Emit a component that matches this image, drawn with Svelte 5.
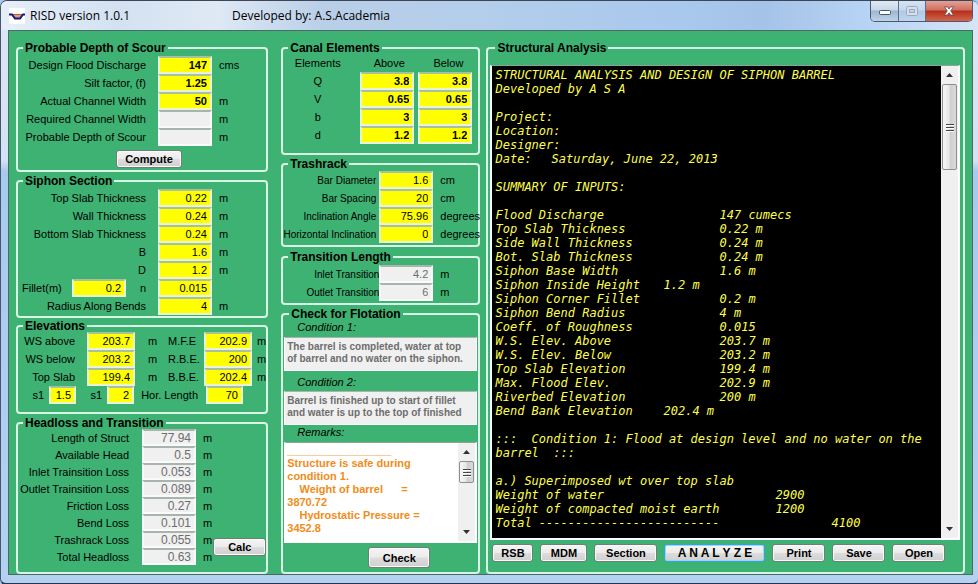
<script>
  const scour = [
    { label: 'Design Flood Discharge', value: '147', unit: 'cms' },
    { label: 'Silt factor, (f)', value: '1.25', unit: '' },
    { label: 'Actual Channel Width', value: '50', unit: 'm' },
    { label: 'Required Channel Width', value: '', unit: 'm', out: true },
    { label: 'Probable Depth of Scour', value: '', unit: 'm', out: true }
  ];
  const siphon = [
    { label: 'Top Slab Thickness', value: '0.22', unit: 'm' },
    { label: 'Wall Thickness', value: '0.24', unit: 'm' },
    { label: 'Bottom Slab Thickness', value: '0.24', unit: 'm' },
    { label: 'B', value: '1.6', unit: 'm' },
    { label: 'D', value: '1.2', unit: 'm' }
  ];
  const elevations = [
    { label: 'WS above', value: '203.7', label2: 'M.F.E', value2: '202.9' },
    { label: 'WS below', value: '203.2', label2: 'R.B.E.', value2: '200' },
    { label: 'Top Slab', value: '199.4', label2: 'B.B.E.', value2: '202.4' }
  ];
  const losses = [
    { label: 'Length of Struct', value: '77.94', unit: 'm', out: true },
    { label: 'Available Head', value: '0.5', unit: 'm', out: true },
    { label: 'Inlet Trainsition Loss', value: '0.053', unit: 'm', out: true },
    { label: 'Outlet Trainsition Loss', value: '0.089', unit: 'm', out: true },
    { label: 'Friction Loss', value: '0.27', unit: 'm', out: true },
    { label: 'Bend Loss', value: '0.101', unit: 'm', out: true },
    { label: 'Trashrack Loss', value: '0.055', unit: 'm', out: true },
    { label: 'Total Headloss', value: '0.63', unit: 'm', out: true }
  ];
  const canal = [
    ['Q', '3.8', '3.8'],
    ['V', '0.65', '0.65'],
    ['b', '3', '3'],
    ['d', '1.2', '1.2']
  ];
  const trashrack = [
    { label: 'Bar Diameter', value: '1.6', unit: 'cm' },
    { label: 'Bar Spacing', value: '20', unit: 'cm' },
    { label: 'Inclination Angle', value: '75.96', unit: 'degrees' },
    { label: 'Horizontal Inclination', value: '0', unit: 'degrees' }
  ];
  const transition = [
    { label: 'Inlet Transition', value: '4.2', unit: 'm', out: true },
    { label: 'Outlet Transition', value: '6', unit: 'm', out: true }
  ];

  const remarks = [
    '_________________',
    'Structure is safe during',
    'condition 1.',
    '    Weight of barrel      =',
    '3870.72',
    '    Hydrostatic Pressure =',
    '3452.8'
  ].join('\n');

  const report = [
    'STRUCTURAL ANALYSIS AND DESIGN OF SIPHON BARREL',
    'Developed by A S A',
    '',
    'Project:',
    'Location:',
    'Designer:',
    'Date:\tSaturday, June 22, 2013',
    '',
    'SUMMARY OF INPUTS:',
    '',
    'Flood Discharge\t\t\t147 cumecs',
    'Top Slab Thickness\t\t0.22 m',
    'Side Wall Thickness\t\t0.24 m',
    'Bot. Slab Thickness\t\t0.24 m',
    'Siphon Base Width\t\t1.6 m',
    'Siphon Inside Height\t1.2 m',
    'Siphon Corner Fillet\t\t0.2 m',
    'Siphon Bend Radius\t\t4 m',
    'Coeff. of Roughness\t\t0.015',
    'W.S. Elev. Above\t\t203.7 m',
    'W.S. Elev. Below\t\t203.2 m',
    'Top Slab Elevation\t\t199.4 m',
    'Max. Flood Elev.\t\t202.9 m',
    'Riverbed Elevation\t\t200 m',
    'Bend Bank Elevation\t202.4 m',
    '',
    ':::  Condition 1: Flood at design level and no water on the',
    'barrel  :::',
    '',
    'a.) Superimposed wt over top slab',
    'Weight of water\t\t\t\t2900',
    'Weight of compacted moist earth\t1200',
    'Total -------------------------\t\t4100'
  ].join('\n');

  const slug = (group, text) => group + '-' + text.toLowerCase().replace(/[^a-z0-9]+/g, '-');
</script>

{#snippet rows(group, items)}
  {#each items as item}
    <div class="row">
      <label for={slug(group, item.label)}>{item.label}</label>
      <input id={slug(group, item.label)} type="text" value={item.value} readonly={item.out} class:out={item.out} />
      <span class="unit">{item.unit}</span>
    </div>
  {/each}
{/snippet}

{#snippet scrollbar(kind)}
  <div class="scrollbar {kind}" aria-hidden="true">
    <svg class="arrow" viewBox="0 0 7 4"><path d="M3.5 0 7 4H0Z" fill="#333" /></svg>
    <div class="thumb">
      <svg viewBox="0 0 8 9"><path d="M0 1.500h8M0 4.500h8M0 7.500h8" stroke="#444" /><path d="M0 2.500h8M0 5.500h8M0 8.500h8" stroke="#fff" /></svg>
    </div>
    <svg class="arrow down" viewBox="0 0 7 4"><path d="M0 0H7L3.5 4Z" fill="#333" /></svg>
  </div>
{/snippet}

<div class="window">
  <header>
    <svg class="logo" viewBox="0 0 16 16">
      <rect width="16" height="16" fill="#fff" />
      <path d="M3.500 6.500h9.500l-2.500 4H6Z" fill="#e0a070" />
      <path d="M4 6.500h9" stroke="#b8602c" />
      <path d="M0 6.500h3l3 4h5l3-4h2" fill="none" stroke="#16168c" stroke-width="2" />
    </svg>
    <span class="name">RISD version 1.0.1</span>
    <span>Developed by: A.S.Academia</span>
    <div class="controls">
      <button aria-label="Minimize"><svg viewBox="0 0 12 10"><rect x=".5" y="4.500" width="11" height="4" rx="1" fill="#fff" stroke="#4a5566" /></svg></button>
      <button class="max" aria-label="Maximize" disabled><svg viewBox="0 0 12 10"><rect x=".5" y=".5" width="11" height="9" rx="1" fill="#d6e0ea" stroke="#9aabbf" /><rect x="3.500" y="3.500" width="5" height="3" fill="#c2d2e2" stroke="#9aabbf" /></svg></button>
      <button class="close" aria-label="Close"><svg viewBox="0 0 12 11"><path d="M1 1h3.200L6 3.300 7.800 1H11L7.900 5.300 11 10H7.800L6 7.400 4.200 10H1l3.100-4.700Z" fill="#fff" stroke="#5d4040" stroke-width=".8" /></svg></button>
    </div>
  </header>

  <main>
    <div class="col left">
      <fieldset class="scour">
        <legend>Probable Depth of Scour</legend>
        {@render rows('scour', scour)}
        <button class="btn">Compute</button>
      </fieldset>

      <fieldset class="siphon">
        <legend>Siphon Section</legend>
        {@render rows('siphon', siphon)}
        <div class="row fillet">
          <label for="fillet">Fillet(m)</label>
          <input id="fillet" type="text" value="0.2" />
          <label for="siphon-n">n</label>
          <input id="siphon-n" type="text" value="0.015" />
          <span class="unit"></span>
        </div>
        {@render rows('siphon', [{ label: 'Radius Along Bends', value: '4', unit: 'm' }])}
      </fieldset>

      <fieldset class="elev">
        <legend>Elevations</legend>
        {#each elevations as e}
          <div class="row">
            <label for={slug('elev', e.label)}>{e.label}</label>
            <input id={slug('elev', e.label)} type="text" value={e.value} />
            <span class="unit">m</span>
            <label class="second" for={slug('elev', e.label2)}>{e.label2}</label>
            <input id={slug('elev', e.label2)} type="text" value={e.value2} />
            <span class="unit last">m</span>
          </div>
        {/each}
        <div class="row slopes">
          <label for="slope-a">s1</label>
          <input id="slope-a" type="text" value="1.5" />
          <label for="slope-b">s1</label>
          <input id="slope-b" type="text" value="2" />
          <label for="hor-length">Hor. Length</label>
          <input id="hor-length" class="wide" type="text" value="70" />
        </div>
      </fieldset>

      <fieldset class="loss">
        <legend>Headloss and Transition</legend>
        <div class="split">
          <div>{@render rows('loss', losses)}</div>
          <button class="btn">Calc</button>
        </div>
      </fieldset>
    </div>

    <div class="col mid">
      <fieldset class="canal">
        <legend>Canal Elements</legend>
        <table>
          <thead>
            <tr><th scope="col">Elements</th><th scope="col">Above</th><th scope="col">Below</th></tr>
          </thead>
          <tbody>
            {#each canal as [name, above, below]}
              <tr>
                <th scope="row">{name}</th>
                <td><input type="text" value={above} aria-label="{name} above" /></td>
                <td><input type="text" value={below} aria-label="{name} below" /></td>
              </tr>
            {/each}
          </tbody>
        </table>
      </fieldset>

      <fieldset class="trash">
        <legend>Trashrack</legend>
        {@render rows('trash', trashrack)}
      </fieldset>

      <fieldset class="trans">
        <legend>Transition Length</legend>
        {@render rows('trans', transition)}
      </fieldset>

      <fieldset class="flotation">
        <legend>Check for Flotation</legend>
        <label for="cond1">Condition 1:</label>
        <textarea id="cond1" class="cond" readonly value={'The barrel is completed, water at top\nof barrel and no water on the siphon.'}></textarea>
        <label for="cond2" class="later">Condition 2:</label>
        <textarea id="cond2" class="cond" readonly value={'Barrel is finished up to start of fillet\nand water is up to the top of finished'}></textarea>
        <label for="remarks">Remarks:</label>
        <div class="pane remarks">
          <textarea id="remarks" readonly value={remarks}></textarea>
          {@render scrollbar('small')}
        </div>
        <button class="btn">Check</button>
      </fieldset>
    </div>

    <div class="col right">
      <fieldset class="analysis">
        <legend>Structural Analysis</legend>
        <div class="pane report">
          <textarea aria-label="Structural analysis report" readonly value={report}></textarea>
          {@render scrollbar('large')}
        </div>
        <div class="actions">
          <button class="btn s">RSB</button>
          <button class="btn m">MDM</button>
          <button class="btn l">Section</button>
          <button class="btn focus">A N A L Y Z E</button>
          <button class="btn">Print</button>
          <button class="btn">Save</button>
          <button class="btn">Open</button>
        </div>
      </fieldset>
    </div>
  </main>
</div>

<style>
  :global(body) {
    margin: 0;
    background: #a9c9ee;
  }
  .window {
    box-sizing: border-box;
    min-height: 100vh;
    display: flex;
    flex-direction: column;
    padding: 0 5px 8px 7px;
    border-top: 1px solid #3c4657;
    border-left: 1px solid #46566c;
    border-bottom: 2px solid #26354c;
    border-radius: 7px 7px 6px 6px;
    background: linear-gradient(#dbe7f5 0, #d3e2f4 160px, #a9c9ee 170px, #b4d1f2 100%);
    font-family: 'Liberation Sans', Arial, sans-serif;
    font-size: 11px;
    color: #000;
  }
  header {
    display: flex;
    align-items: center;
    height: 29px;
    margin: 0 -5px 0 -7px;
    padding: 0 5px 0 8px;
    border-radius: 6px 6px 0 0;
    box-sizing: border-box;
    background: linear-gradient(90deg, #e6eff9 0, #d3e1f1 12%, #dfe9f5 22%, #b9cfe8 33%, #b3cdeb 50%, #a9c8ee 70%, #a5c3e8 78%, #b6d2f4 88%, #d5e4f6 100%);
    font-family: 'Open Sans', 'Noto Sans', sans-serif;
    font-size: 12px;
  }
  .logo {
    width: 16px;
    height: 16px;
    flex: none;
  }
  .name {
    width: 207px;
    padding-left: 5px;
    box-sizing: border-box;
  }
  .controls {
    display: flex;
    align-self: flex-start;
    margin-left: auto;
    height: 20px;
    border: 1px solid #4b5a70;
    border-top: 0;
    border-radius: 0 0 5px 5px;
    overflow: hidden;
  }
  .controls button {
    display: flex;
    align-items: center;
    justify-content: center;
    width: 28px;
    padding: 0;
    border: 0;
    border-right: 1px solid #5d6f88;
    background: linear-gradient(#dfe9f4 0, #c8d8e9 45%, #9fb6d0 50%, #bdd3ea 100%);
  }
  .controls .max {
    width: 27px;
    background: linear-gradient(#d5e3f1 0, #c5d8ec 45%, #b1c9e3 50%, #bfd6ef 100%);
  }
  .controls .close {
    width: 46px;
    border: 0;
    background: linear-gradient(#e2a196 0, #d0705f 45%, #b52f1b 50%, #d2654c 100%);
  }
  .controls svg {
    width: 12px;
    height: 10px;
  }
  main {
    flex: 1;
    display: grid;
    grid-template-columns: 252fr 212fr 484fr;
    padding: 11px 7px 0 7px;
    border: 1px solid #4a6a68;
    background: #3eb272;
  }
  .col {
    display: flex;
    flex-direction: column;
    min-width: 0;
  }
  .mid {
    margin-left: 13px;
  }
  .right {
    margin-left: 6px;
  }
  fieldset {
    min-width: 0;
    margin: 0;
    padding: 0;
    border: 2px solid #d8f5e6;
    border-radius: 4px;
  }
  legend {
    margin-left: 5px;
    padding: 0 2px;
    font-size: 12px;
    line-height: 12px;
    font-weight: bold;
    white-space: nowrap;
  }
  .row {
    display: flex;
    align-items: center;
    height: 18px;
    white-space: nowrap;
  }
  .row label {
    width: 128px;
    text-align: right;
    flex: none;
  }
  input {
    box-sizing: border-box;
    width: 54px;
    height: 18px;
    padding: 0 3px;
    border: 2px solid #e9f3d8;
    border-top-color: #a9c0a0;
    background: #ff0;
    color: #000;
    font: 11px 'Liberation Sans', Arial, sans-serif;
    text-align: right;
    flex: none;
  }
  input.out {
    background: #f0f0f0;
    border-color: #fafafa;
    border-top-color: #a8b4ac;
    color: #6d6d6d;
  }
  .unit {
    padding-left: 7px;
  }
  .btn {
    height: 18px;
    width: 53px;
    padding: 0;
    border: 1px solid #6f7f77;
    border-radius: 3px;
    background: linear-gradient(#f4f4f4 0, #ececec 48%, #dcdcdc 52%, #d0d0d0 100%);
    box-shadow: inset 0 0 0 1px #fafafa;
    color: #000;
    font: bold 11px 'Liberation Sans', Arial, sans-serif;
    white-space: nowrap;
  }

  /* left column */
  .scour .row label,
  .siphon .row label {
    padding-right: 12px;
  }
  .scour .row input {
    font-weight: bold;
  }
  .scour {
    padding-top: 2px;
    height: 130px;
    box-sizing: border-box;
  }
  .scour .btn {
    display: block;
    width: 66px;
    margin: 4px 0 0 98px;
  }
  .siphon {
    margin-top: 3px;
    padding: 2px 0 1px;
  }
  .siphon .fillet label:first-child {
    width: 54px;
    padding-right: 0;
    text-align: left;
    padding-left: 4px;
    box-sizing: border-box;
  }
  .siphon .fillet input + label {
    width: 20px;
  }
  .elev {
    margin-top: 2px;
    padding-bottom: 8px;
  }
  .elev .row label {
    width: 57px;
    padding-right: 12px;
  }
  .elev .row input {
    width: 48px;
  }
  .elev .row .unit {
    width: 20px;
    padding-left: 13px;
  }
  .elev .row .second {
    width: 36px;
    padding-right: 0;
    text-align: left;
  }
  .elev .row .last {
    width: 8px;
    padding-left: 5px;
  }
  .elev .slopes label {
    width: 26px;
    padding-right: 5px;
  }
  .elev .slopes input {
    width: 27px;
  }
  .elev .slopes label:nth-of-type(3) {
    width: 64px;
    padding-right: 8px;
  }
  .elev .slopes .wide {
    width: 37px;
  }
  .loss {
    flex: 1;
    margin-top: 3px;
  }
  .split {
    display: flex;
    justify-content: space-between;
    align-items: flex-end;
  }
  .split .btn {
    margin-bottom: 9px;
  }
  .loss .row {
    height: 17px;
  }
  .loss .row label {
    width: 111px;
    padding-right: 13px;
  }
  .loss .row input {
    height: 17px;
    font-size: 12px;
  }

  /* middle column */
  table {
    width: 100%;
    border-collapse: collapse;
    table-layout: fixed;
  }
  .canal {
    padding-bottom: 9px;
  }
  th,
  td {
    height: 18px;
    padding: 0;
    font-weight: normal;
    line-height: 17px;
  }
  td input {
    display: block;
    font-weight: bold;
  }
  th:first-child {
    width: 77px;
    box-sizing: border-box;
    padding-right: 8px;
  }
  th:nth-child(2) {
    width: 58px;
  }
  .trash {
    margin-top: 3px;
    padding: 1px 0 2px;
  }
  .trash .row label {
    width: 93px;
    padding-right: 3px;
    font-size: 10px;
  }
  .trans {
    margin-top: 4px;
    padding: 2px 0;
  }
  .trans .row label {
    width: 96px;
    font-size: 10px;
  }
  .flotation {
    flex: 1;
    margin-top: 3px;
    padding: 0 1px;
  }
  .flotation label {
    display: block;
    height: 17px;
    padding-left: 13px;
    line-height: 14px;
    font-style: italic;
    box-sizing: border-box;
  }
  .flotation .later {
    height: 20px;
    padding-top: 4px;
  }
  textarea {
    display: block;
    box-sizing: border-box;
    width: 100%;
    margin: 0;
    border: 0;
    resize: none;
    overflow: hidden;
    outline: 0;
    white-space: pre;
    font: bold 11px 'Liberation Sans', Arial, sans-serif;
  }
  .cond {
    height: 34px;
    padding: 3px 0 0 2px;
    border: 1px solid #fff;
    border-top-color: #a8b4ac;
    background: #f0f0f0;
    color: #6d6d6d;
    font-size: 10px;
    line-height: 12px;
  }
  .pane {
    display: flex;
    border: 2px solid #fff;
    border-top: 1px solid #8aa596;
    background: #fff;
  }
  .remarks {
    height: 98px;
  }
  .remarks textarea {
    flex: 1;
    height: 98px;
    padding: 1px 0 0 1px;
    color: #f28c18;
    line-height: 13px;
  }
  .flotation .btn {
    display: block;
    width: 62px;
    height: 21px;
    margin: 4px 0 4px 84px;
  }
  .scrollbar {
    flex: none;
    width: 17px;
    display: flex;
    flex-direction: column;
    align-items: center;
    background: #f0f0f0;
  }
  .arrow {
    width: 7px;
    height: 4px;
    margin: 7px 0;
  }
  .down {
    margin-top: auto;
  }
  .thumb {
    width: 15px;
    height: 22px;
    box-sizing: border-box;
    display: flex;
    align-items: center;
    justify-content: center;
    border: 1px solid #8e8e8e;
    border-radius: 2px;
    background: linear-gradient(90deg, #f6f6f6 0, #e6e6e6 48%, #cfcfcf 54%, #dadada 100%);
  }
  .large .thumb {
    height: 86px;
  }
  .thumb svg {
    width: 8px;
    height: 9px;
  }

  /* right column */
  .analysis {
    flex: 1;
    display: flex;
    flex-direction: column;
    padding: 0 3px 0 2px;
  }
  .report {
    flex: 1;
    margin-top: 11px;
  }
  .report textarea {
    flex: 1;
    padding: 2px 0 0 3px;
    background: #000;
    color: #ffff4a;
    font: italic 12px 'DejaVu Sans Mono', 'Liberation Mono', monospace;
    line-height: 14px;
    tab-size: 56px;
  }
  .actions {
    display: flex;
    gap: 7px;
    padding: 4px 0 10px 2px;
  }
  .actions .s {
    width: 41px;
  }
  .actions .m {
    width: 47px;
  }
  .actions .l {
    width: 63px;
  }
  .actions .focus {
    width: 101px;
    border-color: #3c9fd6;
    box-shadow: inset 0 0 0 1px #8fdcf8;
    font-size: 12px;
  }
</style>
